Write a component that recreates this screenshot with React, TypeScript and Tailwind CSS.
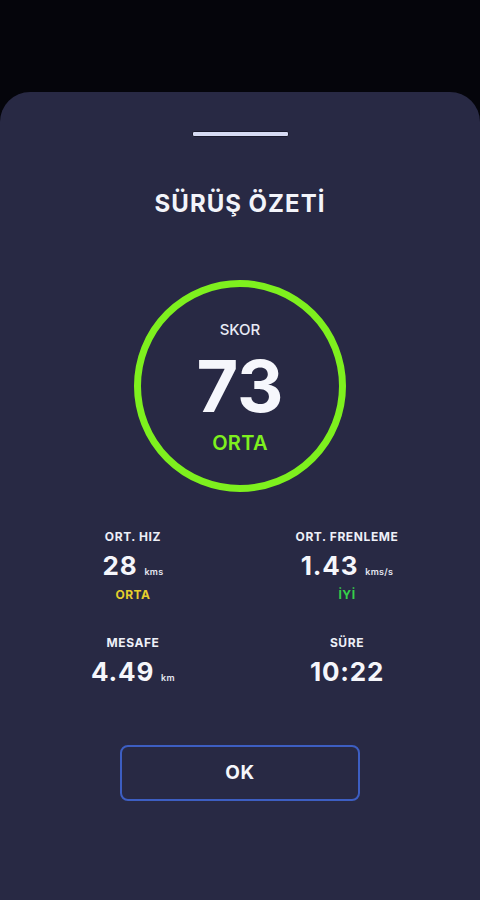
import React from "react";

function Stat({
  label,
  value,
  unit,
  sub,
  subColor,
}: {
  label: string;
  value: string;
  unit?: string;
  sub?: string;
  subColor?: string;
}) {
  return (
    <div className="flex flex-col items-center">
      <div className="text-[12px] leading-[16px] font-bold text-[#eef0f8] tracking-[0.6px]">{label}</div>
      <div className="mt-[6px] flex items-baseline">
        <span className="text-[26px] leading-[30px] font-bold text-[#f5f6fb] tracking-[0.8px]">{value}</span>
        {unit && <span className="ml-[7px] text-[9px] font-semibold text-[#e6e8f2] tracking-[0.3px]">{unit}</span>}
      </div>
      {sub && (
        <div className={`mt-[6px] text-[12px] leading-[16px] font-bold tracking-[0.5px] ${subColor}`}>{sub}</div>
      )}
    </div>
  );
}

export default function App() {
  return (
    <div
      className="w-[480px] h-[900px] bg-[#05050b] flex flex-col overflow-hidden"
      style={{ fontFamily: "Inter, 'Noto Sans', sans-serif" }}
    >
      <div className="h-[92px] shrink-0" />
      <div className="flex-1 bg-[#282944] rounded-t-[30px] flex flex-col items-center">
        <div className="mt-[39px] w-[97px] h-[6px] rounded-[2px] bg-[#d6daf3] border border-[#1a1a2c]" />
        <div className="mt-[52px] text-[24px] leading-[30px] font-bold text-[#f3f4fa] tracking-[1px]">
          SÜRÜŞ ÖZETİ
        </div>
        <div className="mt-[61px] w-[212px] h-[212px] rounded-full border-[7px] border-[#7ef01e] flex flex-col items-center">
          <div className="mt-[33px] text-[15px] leading-[20px] font-medium text-[#e9ebf5]">SKOR</div>
          <div className="mt-[10px] text-[72px] leading-[72px] font-bold text-[#f6f7fc]">73</div>
          <div className="mt-[8px] text-[20px] leading-[26px] font-semibold text-[#7ef01e] tracking-[0.3px]">ORTA</div>
        </div>
        <div className="mt-[37px] w-full px-[26px] grid grid-cols-2 gap-y-[32px]">
          <Stat label="ORT. HIZ" value="28" unit="kms" sub="ORTA" subColor="text-[#e5cf2c]" />
          <Stat label="ORT. FRENLEME" value="1.43" unit="kms/s" sub="İYİ" subColor="text-[#35d04a]" />
          <Stat label="MESAFE" value="4.49" unit="km" />
          <Stat label="SÜRE" value="10:22" />
        </div>
        <div className="mt-[58px] w-[240px] h-[56px] rounded-[8px] border-2 border-[#3d5ec2] flex items-center justify-center">
          <span className="text-[19px] font-bold text-[#f5f6fb] tracking-[0.5px]">OK</span>
        </div>
      </div>
    </div>
  );
}
